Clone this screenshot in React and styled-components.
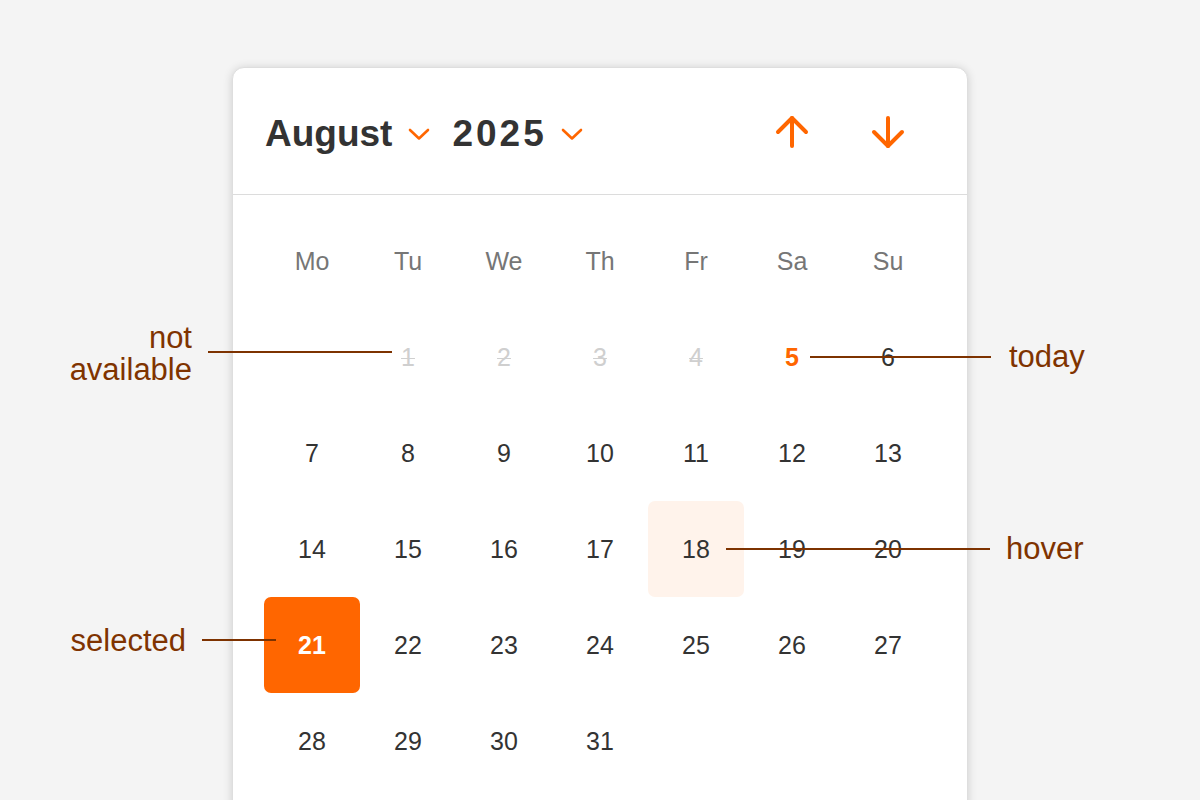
import React from "react";
import styled, { createGlobalStyle } from "styled-components";
import { ArrowUp, ArrowDown } from "lucide-react";

const GlobalStyle = createGlobalStyle`
  html, body { margin: 0; padding: 0; }
  body {
    background: #f4f4f4;
    font-family: "Liberation Sans", Arial, Helvetica, sans-serif;
    overflow: hidden;
  }
`;

const Page = styled.div`
  position: relative;
  width: 1200px;
  height: 800px;
  overflow: hidden;
  background: #f4f4f4;
  padding-top: 67px;
  box-sizing: border-box;
`;

const Card = styled.div`
  width: 736px;
  margin: 0 auto;
  background: #ffffff;
  border-radius: 12px;
  border: 1px solid #dedede;
  box-sizing: border-box;
  box-shadow: 0 1px 10px rgba(0, 0, 0, 0.16);
  padding-bottom: 40px;
`;

const Header = styled.div`
  height: 126px;
  display: flex;
  align-items: center;
  justify-content: space-between;
  padding: 0 31px 0 32px;
  border-bottom: 1px solid #dcdcdc;
`;

const Pickers = styled.div`
  display: flex;
  align-items: center;
  gap: 22px;
  padding-top: 5px;
`;

const Picker = styled.button`
  display: flex;
  align-items: center;
  gap: ${(p) => p.$gap}px;
  background: none;
  border: none;
  padding: 0;
  cursor: pointer;
  font-family: "Liberation Sans", Arial, sans-serif;
  font-weight: 700;
  font-size: 37px;
  color: #333333;
  letter-spacing: ${(p) => p.$spacing || 0}px;
`;

const Chevron = () => (
  <svg width="22" height="14" viewBox="0 0 22 14" fill="none">
    <path d="M2 3 L11 11.5 L20 3" stroke="#ff6600" strokeWidth="2.6" strokeLinecap="round" strokeLinejoin="round" />
  </svg>
);

const Nav = styled.div`
  display: flex;
  padding-top: 2px;
`;

const NavButton = styled.button`
  width: 96px;
  height: 64px;
  display: flex;
  align-items: center;
  justify-content: center;
  background: none;
  border: none;
  padding: 0;
  color: #ff6600;
  cursor: pointer;
`;

const Grid = styled.div`
  display: grid;
  grid-template-columns: repeat(7, 96px);
  grid-auto-rows: 96px;
  padding: 18px 31px 0;
`;

const WeekDay = styled.div`
  display: flex;
  align-items: center;
  justify-content: center;
  font-size: 25px;
  color: #767676;
`;

const Blank = styled.div``;

const Day = styled.div`
  display: flex;
  align-items: center;
  justify-content: center;
  border-radius: 7px;
  font-size: 25px;
  color: ${(p) =>
    p.$state === "selected" ? "#ffffff" :
    p.$state === "today" ? "#ff6600" :
    p.$state === "disabled" ? "#cfcfcf" : "#333333"};
  font-weight: ${(p) => (p.$state === "selected" || p.$state === "today" ? 700 : 400)};
  background: ${(p) =>
    p.$state === "selected" ? "#ff6600" :
    p.$state === "hover" ? "#fff3eb" : "transparent"};
  text-decoration: ${(p) => (p.$state === "disabled" ? "line-through" : "none")};
  text-decoration-thickness: 1px;
`;

const Callout = styled.div`
  position: absolute;
  left: ${(p) => p.$x}px;
  top: ${(p) => p.$y}px;
  width: ${(p) => p.$w}px;
  height: 2px;
  background: #7d3200;
`;

const Label = styled.div`
  position: absolute;
  left: ${(p) => p.$x}px;
  top: ${(p) => p.$y}px;
  width: ${(p) => p.$w}px;
  text-align: ${(p) => p.$align};
  font-size: 31px;
  line-height: 32px;
  color: #7f3300;
`;

const weekDays = ["Mo", "Tu", "We", "Th", "Fr", "Sa", "Su"];

function stateFor(d) {
  if (d <= 4) return "disabled";
  if (d === 5) return "today";
  if (d === 18) return "hover";
  if (d === 21) return "selected";
  return "normal";
}

export default function App() {
  const days = Array.from({ length: 31 }, (_, i) => i + 1);
  return (
    <>
      <GlobalStyle />
      <Page>
        <Card>
          <Header>
            <Pickers>
              <Picker $gap={16}>
                August
                <Chevron />
              </Picker>
              <Picker $gap={14} $spacing={3}>
                2025
                <Chevron />
              </Picker>
            </Pickers>
            <Nav>
              <NavButton aria-label="previous">
                <ArrowUp size={48} strokeWidth={2} />
              </NavButton>
              <NavButton aria-label="next">
                <ArrowDown size={48} strokeWidth={2} />
              </NavButton>
            </Nav>
          </Header>
          <Grid>
            {weekDays.map((w) => (
              <WeekDay key={w}>{w}</WeekDay>
            ))}
            <Blank />
            {days.map((d) => (
              <Day key={d} $state={stateFor(d)}>
                {d}
              </Day>
            ))}
          </Grid>
        </Card>

        <Label $x={20} $y={322} $w={172} $align="right">
          not<br />available
        </Label>
        <Callout $x={208} $y={351} $w={184} />

        <Callout $x={810} $y={356} $w={181} />
        <Label $x={1009} $y={341} $w={150} $align="left">today</Label>

        <Callout $x={726} $y={548} $w={264} />
        <Label $x={1006} $y={533} $w={150} $align="left">hover</Label>

        <Label $x={5} $y={625} $w={181} $align="right">selected</Label>
        <Callout $x={202} $y={639} $w={74} />
      </Page>
    </>
  );
}
